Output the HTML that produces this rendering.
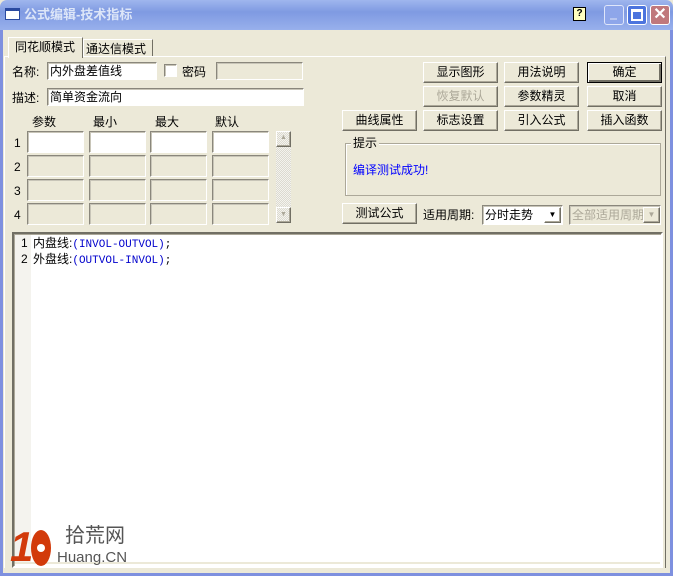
<!DOCTYPE html>
<html><head><meta charset="utf-8"><style>
*{margin:0;padding:0;box-sizing:border-box}
body{width:673px;height:576px;overflow:hidden;background:#ece9d8;font-family:"Liberation Sans","SimSun","Noto Sans CJK SC",sans-serif;font-size:12px;color:#000;position:relative}
.a{position:absolute}
.title{left:0;top:0;width:673px;height:30px;background:linear-gradient(#9fb6ee,#7f9ae2 40%,#98b0ec);border-radius:7px 7px 0 0}
.frameL{left:0;top:30px;width:3px;height:546px;background:#7e90df}
.frameR{right:0;top:30px;width:3px;height:546px;background:#7e90df}
.frameB{left:0;bottom:0;width:673px;height:3px;background:#7e90df}
.inp{background:#fff;border:1px solid;border-color:#8a877c #fff #fff #8a877c;box-shadow:inset 1px 1px 0 #c8c5b8}
.dis{background:#ece9d8;border:1px solid;border-color:#8a877c #fff #fff #8a877c;box-shadow:inset 1px 1px 0 #c8c5b8}
.btn{width:75px;height:21px;border:1px solid;border-color:#fff #716f64 #716f64 #fff;box-shadow:inset -1px -1px 0 #aca899;text-align:center;line-height:19px;font-size:12px}
.t{white-space:nowrap;line-height:14px}
.m{font-family:"Liberation Mono","Noto Sans CJK SC",monospace;font-size:11px}
</style></head><body>
<div class="a title"></div>
<div class="a" style="left:5px;top:8px;width:15px;height:12px;background:#fff;border:1px solid #2a4aa0;border-top:3px solid #2a4aa0"></div>
<div class="a t" style="left:24px;top:8px;color:#dde6f8;font-size:13px;font-weight:bold">公式编辑-技术指标</div>
<div class="a" style="left:573px;top:7px;width:13px;height:14px;background:#ffffc0;border:1px solid #000;font-size:10px;font-weight:bold;text-align:center;line-height:12px">?</div>
<div class="a" style="left:604px;top:5px;width:20px;height:20px;background:#8ea6ea;border:1px solid #dfe6fa;border-radius:3px"><div class="a" style="left:5px;top:12px;width:7px;height:2px;background:#b8c6f0"></div></div>
<div class="a" style="left:627px;top:5px;width:20px;height:20px;background:#4c74de;border:1px solid #fff;border-radius:3px"><div class="a" style="left:3px;top:3px;width:12px;height:12px;border:2px solid #fff;border-top-width:3px"></div></div>
<div class="a" style="left:650px;top:5px;width:20px;height:20px;background:#c0787c;border:1px solid #fff;border-radius:3px;color:#fff;font-size:16px;font-weight:bold;text-align:center;line-height:17px">✕</div>
<div class="a frameL"></div><div class="a frameR"></div><div class="a frameB"></div>

<div class="a" style="left:4px;top:56px;width:662px;height:512px;border:1px solid;border-color:#fff #716f64 #716f64 #fff;border-bottom:none"></div>
<div class="a" style="left:8px;top:37px;width:75px;height:21px;background:#ece9d8;border:1px solid;border-color:#fff #716f64 transparent #fff;border-bottom:none"></div>
<div class="a t" style="left:15px;top:40px">同花顺模式</div>
<div class="a" style="left:83px;top:39px;width:70px;height:17px;border:1px solid;border-color:#fff #716f64 transparent #fff;border-bottom:none"></div>
<div class="a t" style="left:86px;top:42px">通达信模式</div>

<div class="a t" style="left:12px;top:65px">名称:</div>
<div class="a inp" style="left:47px;top:62px;width:110px;height:18px"></div>
<div class="a t" style="left:50px;top:64px">内外盘差值线</div>
<div class="a inp" style="left:164px;top:64px;width:13px;height:13px"></div>
<div class="a t" style="left:182px;top:65px">密码</div>
<div class="a dis" style="left:216px;top:62px;width:87px;height:18px"></div>
<div class="a t" style="left:12px;top:91px">描述:</div>
<div class="a inp" style="left:47px;top:88px;width:257px;height:18px"></div>
<div class="a t" style="left:50px;top:90px">简单资金流向</div>

<div class="a t" style="left:32px;top:115px">参数</div>
<div class="a t" style="left:93px;top:115px">最小</div>
<div class="a t" style="left:155px;top:115px">最大</div>
<div class="a t" style="left:215px;top:115px">默认</div>
<div class="a t" style="left:14px;top:136px">1</div>
<div class="a t" style="left:14px;top:160px">2</div>
<div class="a t" style="left:14px;top:184px">3</div>
<div class="a t" style="left:14px;top:208px">4</div>
<div class="a inp" style="left:27px;top:131px;width:57px;height:22px"></div>
<div class="a inp" style="left:89px;top:131px;width:57px;height:22px"></div>
<div class="a inp" style="left:150px;top:131px;width:57px;height:22px"></div>
<div class="a inp" style="left:212px;top:131px;width:57px;height:22px"></div>
<div class="a dis" style="left:27px;top:155px;width:57px;height:22px"></div>
<div class="a dis" style="left:89px;top:155px;width:57px;height:22px"></div>
<div class="a dis" style="left:150px;top:155px;width:57px;height:22px"></div>
<div class="a dis" style="left:212px;top:155px;width:57px;height:22px"></div>
<div class="a dis" style="left:27px;top:179px;width:57px;height:22px"></div>
<div class="a dis" style="left:89px;top:179px;width:57px;height:22px"></div>
<div class="a dis" style="left:150px;top:179px;width:57px;height:22px"></div>
<div class="a dis" style="left:212px;top:179px;width:57px;height:22px"></div>
<div class="a dis" style="left:27px;top:203px;width:57px;height:22px"></div>
<div class="a dis" style="left:89px;top:203px;width:57px;height:22px"></div>
<div class="a dis" style="left:150px;top:203px;width:57px;height:22px"></div>
<div class="a dis" style="left:212px;top:203px;width:57px;height:22px"></div>
<div class="a" style="left:276px;top:131px;width:15px;height:92px;background:repeating-conic-gradient(#f4f3ee 0 25%,#dcdad0 0 50%) 0 0/2px 2px"></div>
<div class="a btn" style="left:276px;top:131px;width:15px;height:16px;line-height:12px;font-size:7px;color:#aca899">▲</div>
<div class="a btn" style="left:276px;top:207px;width:15px;height:16px;line-height:14px;font-size:7px;color:#aca899">▼</div>

<div class="a btn" style="left:423px;top:62px">显示图形</div>
<div class="a btn" style="left:504px;top:62px">用法说明</div>
<div class="a btn" style="left:587px;top:62px;border:1px solid #000;box-shadow:inset 1px 1px 0 #fff,inset -2px -2px 0 #716f64">确定</div>
<div class="a btn" style="left:423px;top:86px;color:#aca899">恢复默认</div>
<div class="a btn" style="left:504px;top:86px">参数精灵</div>
<div class="a btn" style="left:587px;top:86px">取消</div>
<div class="a btn" style="left:342px;top:110px">曲线属性</div>
<div class="a btn" style="left:423px;top:110px">标志设置</div>
<div class="a btn" style="left:504px;top:110px">引入公式</div>
<div class="a btn" style="left:587px;top:110px">插入函数</div>

<div class="a" style="left:345px;top:143px;width:316px;height:53px;border:1px solid #aca899;box-shadow:1px 1px 0 #fff inset"></div>
<div class="a t" style="left:351px;top:136px;background:#ece9d8;padding:0 2px">提示</div>
<div class="a t" style="left:353px;top:163px;color:#0000ff">编译测试成功!</div>

<div class="a btn" style="left:342px;top:203px">测试公式</div>
<div class="a t" style="left:423px;top:208px">适用周期:</div>
<div class="a inp" style="left:482px;top:205px;width:81px;height:20px"></div>
<div class="a t" style="left:485px;top:208px">分时走势</div>
<div class="a btn" style="left:544px;top:207px;width:17px;height:16px;font-size:8px;line-height:14px">▼</div>
<div class="a dis" style="left:569px;top:205px;width:92px;height:20px;overflow:hidden"><span class="a t" style="left:2px;top:2px;color:#aca899">全部适用周期</span></div>
<div class="a btn" style="left:643px;top:207px;width:17px;height:16px;font-size:8px;line-height:14px;color:#aca899">▼</div>

<div class="a" style="left:12px;top:232px;width:651px;height:336px;background:#fff;border:2px solid;border-color:#716f64 #fff #fff #716f64;box-shadow:inset 1px 1px 0 #aca899"></div>
<div class="a" style="left:15px;top:235px;width:16px;height:327px;background:#f4f3ee"></div>
<div class="a" style="left:15px;top:562px;width:645px;height:2px;background:#ece9d8"></div>
<div class="a t" style="left:21px;top:236px">1</div>
<div class="a t" style="left:21px;top:252px">2</div>
<div class="a t" style="left:33px;top:236px">内盘线:<span class="m" style="color:#00c">(INVOL-OUTVOL)</span><span class="m">;</span></div>
<div class="a t" style="left:33px;top:252px">外盘线:<span class="m" style="color:#00c">(OUTVOL-INVOL)</span><span class="m">;</span></div>

<div class="a" style="left:10px;top:526px;color:#d23a0a;font-size:42px;font-weight:bold;font-style:italic;line-height:42px">1</div>
<div class="a" style="left:31px;top:530px;width:20px;height:36px;border-radius:50%;background:#d23a0a"><div class="a" style="left:6px;top:14px;width:8px;height:8px;border-radius:50%;background:#fff"></div></div>
<div class="a t" style="left:65px;top:524px;font-size:20px;line-height:24px;color:#555">拾荒网</div>
<div class="a t" style="left:57px;top:549px;font-size:15px;line-height:18px;color:#555">Huang.CN</div>
</body></html>
